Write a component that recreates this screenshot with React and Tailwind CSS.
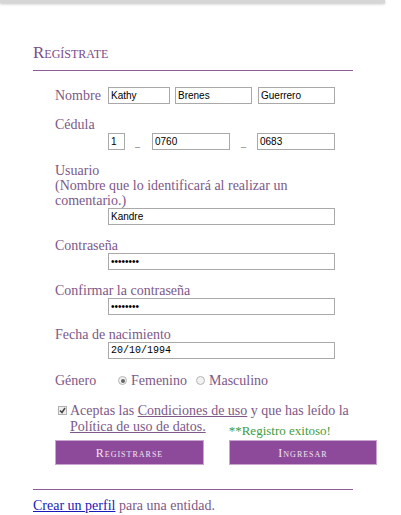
import React from "react";

const labelCls = "text-[14px] leading-[15px] text-[#7d5888]";
const boxCls =
  "block h-[17px] border border-[#a9a9a9] bg-white px-[2px] text-[10px] leading-[15px] text-black outline-none";
const inputCls = boxCls + " font-['Liberation_Sans',Arial,sans-serif]";
const monoCls = boxCls + " font-['Liberation_Mono','Courier_New',monospace]";

function Radio({ checked, label }) {
  return (
    <span className="flex items-center">
      <span className="flex h-[9px] w-[9px] items-center justify-center rounded-full border border-[#b5b5b5] bg-[#f2f2f2]">
        {checked && <span className="h-[4px] w-[4px] rounded-full bg-[#666]" />}
      </span>
      <span className="ml-[4px]">{label}</span>
    </span>
  );
}

export default function App() {
  return (
    <div className="min-h-screen w-[401px] bg-white font-['Liberation_Serif',serif]">
      <div className="h-[3px] w-[385px] bg-[#d6d6d6] shadow-[0_1px_3px_rgba(0,0,0,0.25)]" />

      <div className="ml-[33px] w-[320px] pt-[39px]">
        <h1 className="text-[17px] leading-[22px] text-[#7b4b8b] [font-variant:small-caps]">Regístrate</h1>
        <div className="mt-[6px] h-px bg-[#8b5c96]" />

        <form className="ml-[22px] mt-[16px] w-[330px]">
          {/* Nombre */}
          <div className="flex items-center">
            <span className={labelCls + " w-[53px]"}>Nombre</span>
            <input className={inputCls + " w-[62px]"} defaultValue="Kathy" />
            <input className={inputCls + " ml-[5px] w-[77px]"} defaultValue="Brenes" />
            <input className={inputCls + " ml-[6px] w-[77px]"} defaultValue="Guerrero" />
          </div>

          {/* Cédula */}
          <div className="mt-[13px]">
            <div className={labelCls}>Cédula</div>
            <div className="ml-[53px] mt-[1px] flex items-center">
              <input className={inputCls + " w-[17px]"} defaultValue="1" />
              <span className="w-[25px] translate-y-[1px] text-center text-[10px] leading-none text-[#555]">_</span>
              <input className={inputCls + " ml-[2px] w-[78px]"} defaultValue="0760" />
              <span className="w-[27px] translate-y-[1px] text-center text-[10px] leading-none text-[#555]">_</span>
              <input className={inputCls + " w-[78px]"} defaultValue="0683" />
            </div>
          </div>

          {/* Usuario */}
          <div className="mt-[13px] w-[298px]">
            <div className={labelCls}>Usuario</div>
            <div className={labelCls}>(Nombre que lo identificará al realizar un comentario.)</div>
            <input className={inputCls + " ml-[53px] w-[227px]"} defaultValue="Kandre" />
          </div>

          <div className="mt-[13px]">
            <div className={labelCls}>Contraseña</div>
            <input type="password" className={inputCls + " ml-[53px] w-[227px]"} defaultValue="kandre94" />
          </div>

          <div className="mt-[13px]">
            <div className={labelCls}>Confirmar la contraseña</div>
            <input type="password" className={inputCls + " ml-[53px] w-[227px]"} defaultValue="kandre94" />
          </div>

          <div className="mt-[12px]">
            <div className={labelCls}>Fecha de nacimiento</div>
            <input className={monoCls + " ml-[53px] w-[227px]"} defaultValue="20/10/1994" />
          </div>

          {/* Género */}
          <div className={labelCls + " mt-[14px] flex items-center"}>
            <span className="w-[63px]">Género</span>
            <Radio checked label="Femenino" />
            <span className="ml-[9px]">
              <Radio label="Masculino" />
            </span>
          </div>

          {/* Términos */}
          <div className={labelCls + " ml-[3px] mt-[15px] flex"}>
            <span className="mt-[3px] flex h-[9px] w-[9px] shrink-0 items-center justify-center border border-[#b0b0b0] bg-[#eee]">
              <svg width="7" height="7" viewBox="0 0 7 7">
                <path d="M1 3.5 L3 5.5 L6 1" fill="none" stroke="#444" strokeWidth="1.5" />
              </svg>
            </span>
            <div className="ml-[3px] leading-[16px]">
              <div>
                Aceptas las <a href="#" className="underline">Condiciones de uso</a> y que has leído la
              </div>
              <div className="flex items-end">
                <a href="#" className="underline">Política de uso de datos.</a>
                <span className="ml-[23px] translate-y-[4px] text-[13px] text-[#3f9b3f]">**Registro exitoso!</span>
              </div>
            </div>
          </div>

          <div className="mt-[5px] flex">
            <button
              type="button"
              className="h-[25px] w-[149px] shrink-0 border border-[#c9a6cf] bg-[#8e4a9a] text-[12px] tracking-[1px] text-[#f1e4f3] [font-variant:small-caps]"
            >
              Registrarse
            </button>
            <button
              type="button"
              className="ml-[25px] h-[25px] w-[148px] shrink-0 border border-[#c9a6cf] bg-[#8e4a9a] text-[12px] tracking-[1px] text-[#f1e4f3] [font-variant:small-caps]"
            >
              Ingresar
            </button>
          </div>
        </form>

        <div className="mt-[24px] h-px bg-[#8b5c96]" />
        <p className="mt-[8px] text-[14px] leading-[16px] text-[#7d5888]">
          <a href="#" className="text-[#1a1ab8] underline">Crear un perfil</a> para una entidad.
        </p>
      </div>
    </div>
  );
}
